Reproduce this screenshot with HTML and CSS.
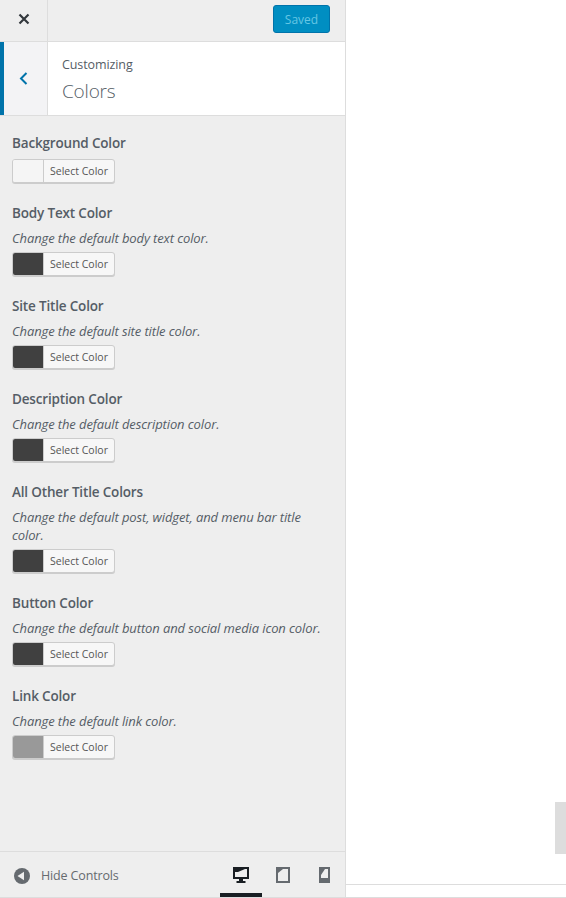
FILE: index.html
```html
<!DOCTYPE html>
<html lang="en">
<head>
    <meta charset="UTF-8">
    <title>Customize: Colors</title>
    <link rel="stylesheet" href="styles.css">
</head>
<body>
    <div class="sidebar">
        <div class="topbar">
            <div class="close">
                <svg width="12" height="12" viewBox="0 0 12 12"><path d="M1.5 1.5l9 9M10.500 1.500l-9 9" stroke="#32373c" stroke-width="2.200" fill="none"/></svg>
            </div>
            <button class="saved">Saved</button>
        </div>
        <div class="section_head">
            <div class="back">
                <svg width="9" height="13" viewBox="0 0 9 13"><path d="M7.500 1L2 6.500 7.500 12" stroke="#0073aa" stroke-width="2" fill="none"/></svg>
            </div>
            <div class="section_title">
                <span class="crumb">Customizing</span>
                <h2>Colors</h2>
            </div>
        </div>
        <div class="controls">
            <div class="control">
                <span class="title">Background Color</span>
                <button class="picker"><span class="swatch swatch_light"></span><span class="picker_text">Select Color</span></button>
            </div>
            <div class="control">
                <span class="title">Body Text Color</span>
                <span class="desc">Change the default body text color.</span>
                <button class="picker"><span class="swatch swatch_dark"></span><span class="picker_text">Select Color</span></button>
            </div>
            <div class="control">
                <span class="title">Site Title Color</span>
                <span class="desc">Change the default site title color.</span>
                <button class="picker"><span class="swatch swatch_dark"></span><span class="picker_text">Select Color</span></button>
            </div>
            <div class="control">
                <span class="title">Description Color</span>
                <span class="desc">Change the default description color.</span>
                <button class="picker"><span class="swatch swatch_dark"></span><span class="picker_text">Select Color</span></button>
            </div>
            <div class="control">
                <span class="title">All Other Title Colors</span>
                <span class="desc">Change the default post, widget, and menu bar title color.</span>
                <button class="picker"><span class="swatch swatch_dark"></span><span class="picker_text">Select Color</span></button>
            </div>
            <div class="control">
                <span class="title">Button Color</span>
                <span class="desc">Change the default button and social media icon color.</span>
                <button class="picker"><span class="swatch swatch_dark"></span><span class="picker_text">Select Color</span></button>
            </div>
            <div class="control">
                <span class="title">Link Color</span>
                <span class="desc">Change the default link color.</span>
                <button class="picker"><span class="swatch swatch_grey"></span><span class="picker_text">Select Color</span></button>
            </div>
        </div>
        <div class="footer">
            <div class="hide">
                <svg width="16" height="16" viewBox="0 0 16 16"><circle cx="8" cy="8" r="8" fill="#656a6f"/><path d="M3.500 8L10 3.800v8.400z" fill="#eee"/></svg>
                <span>Hide Controls</span>
            </div>
            <div class="devices">
                <div class="device device_on">
                    <svg width="16" height="16" viewBox="0 0 16 16"><path d="M0 0h16v12H0z" fill="#191e23"/><path d="M2 2h12v8H2z" fill="#eee"/><path d="M2 2h10L5 5H2z" fill="#191e23"/><path d="M6 12h4v2h2.500v2h-9v-2H6z" fill="#191e23"/></svg>
                </div>
                <div class="device">
                    <svg width="14" height="16" viewBox="0 0 14 16"><path d="M0 0h14v16H0z" fill="#656a6f"/><path d="M2 2h10v12H2z" fill="#eee"/><path d="M2 2h5L2 6z" fill="#656a6f"/></svg>
                </div>
                <div class="device device_last">
                    <svg width="11" height="16" viewBox="0 0 11 16"><path d="M0 0h11v16H0z" fill="#656a6f"/><path d="M2 2h7v9H2z" fill="#eee"/><path d="M2 2h4L2 8z" fill="#656a6f"/></svg>
                </div>
            </div>
        </div>
    </div>
    <div class="preview">
        <div class="preview_space">
            <div class="scroll_thumb"></div>
        </div>
        <div class="preview_strip"></div>
    </div>
</body>
</html>
```

FILE: styles.css
```css
html, body{
    margin: 0px;
    padding: 0px;
    height: 100%;
}

body{
    display: flex;
    height: 898px;
    overflow: hidden;
    background: #fff;
    font-family: "Open Sans", "Noto Sans", sans-serif;
    color: #555d66;
}

.sidebar{
    box-sizing: border-box;
    width: 346px;
    height: 898px;
    display: flex;
    flex-direction: column;
    background: #eee;
    border-right: 1px solid #ddd;
    border-bottom: 1px solid #ddd;
}

.topbar{
    box-sizing: border-box;
    height: 42px;
    display: flex;
    justify-content: space-between;
    align-items: flex-start;
    border-bottom: 1px solid #ddd;
    padding-right: 15px;
}

.close{
    box-sizing: border-box;
    width: 48px;
    height: 41px;
    display: flex;
    align-items: center;
    justify-content: center;
    border-right: 1px solid #ddd;
    padding-bottom: 3px;
}

.saved{
    box-sizing: border-box;
    width: 57px;
    height: 28px;
    margin-top: 5px;
    padding: 0px;
    background: #008ec2;
    border: 1px solid #0073aa;
    border-radius: 3px;
    color: #66c6e4;
    font-family: inherit;
    font-size: 12px;
}

.section_head{
    box-sizing: border-box;
    height: 74px;
    display: flex;
    background: #fff;
    border-bottom: 1px solid #ddd;
}

.back{
    box-sizing: border-box;
    width: 48px;
    display: flex;
    align-items: center;
    justify-content: center;
    background: #f3f3f5;
    border-left: 4px solid #0073aa;
    border-right: 1px solid #ddd;
    padding-right: 4px;
}

.section_title{
    padding: 14px 14px 0px;
}

.crumb{
    display: block;
    font-size: 12.500px;
    letter-spacing: -0.1px;
    line-height: 18px;
    color: #555d66;
}

.section_title h2{
    margin: 4px 0px 0px;
    font-size: 19px;
    font-weight: 300;
    letter-spacing: -0.2px;
    line-height: 26px;
    color: #555d66;
}

.controls{
    flex: 1;
    padding: 17px 12px 0px;
}

.control{
    margin-bottom: 20px;
}

.title{
    display: block;
    font-size: 13.500px;
    font-weight: 600;
    letter-spacing: -0.17px;
    line-height: 21px;
    margin-bottom: 5px;
}

.desc{
    display: block;
    font-size: 13px;
    font-style: italic;
    letter-spacing: -0.11px;
    line-height: 18px;
    margin-bottom: 5px;
}

.picker{
    box-sizing: border-box;
    width: 103px;
    height: 24px;
    padding: 0px;
    display: flex;
    background: #f7f7f7;
    border: 1px solid #ccc;
    border-radius: 3px;
    box-shadow: 0 1px 0 #ccc;
    overflow: hidden;
    font-family: inherit;
}

.swatch{
    width: 30px;
    height: 100%;
    border-right: 1px solid #ccc;
}

.swatch_light{
    background: #f5f5f5;
}

.swatch_dark{
    background: #404040;
}

.swatch_grey{
    background: #999;
}

.picker_text{
    flex: 1;
    font-size: 10.500px;
    line-height: 22px;
    color: #555;
    text-align: center;
}

.footer{
    box-sizing: border-box;
    height: 46px;
    display: flex;
    justify-content: space-between;
    border-top: 1px solid #ddd;
}

.hide{
    display: flex;
    align-items: center;
    gap: 11px;
    padding: 2px 0px 0px 14px;
    font-size: 12.500px;
    letter-spacing: -0.15px;
    color: #656a6f;
}

.devices{
    display: flex;
}

.device{
    box-sizing: border-box;
    width: 42px;
    height: 45px;
    display: flex;
    justify-content: center;
    padding-top: 15px;
}

.device_on{
    border-bottom: 4px solid #191e23;
}

.device_last{
    width: 41px;
}

.preview{
    flex: 1;
    display: flex;
    flex-direction: column;
}

.preview_space{
    flex: 1;
    height: 884px;
    position: relative;
}

.scroll_thumb{
    position: absolute;
    right: 0px;
    top: 802px;
    width: 11px;
    height: 52px;
    background: #ddd;
}

.preview_strip{
    height: 12px;
    border-top: 1px solid #ddd;
    border-bottom: 1px solid #ddd;
}
```
